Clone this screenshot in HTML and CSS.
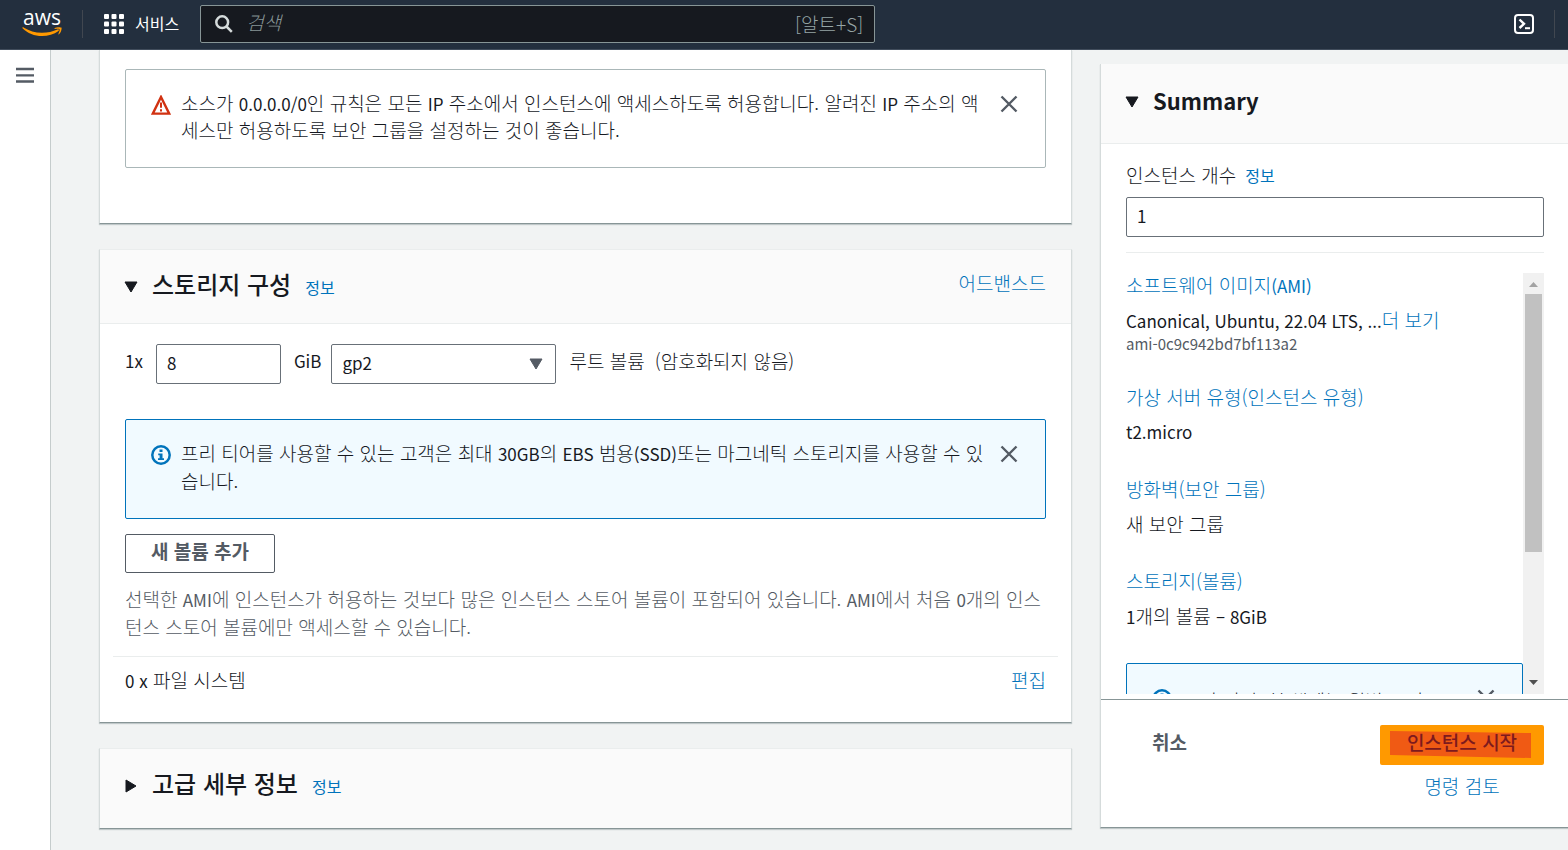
FILE: index.html
```html
<!DOCTYPE html>
<html lang="ko">
<head>
<meta charset="utf-8">
<title>인스턴스 시작 | EC2</title>
<link rel="stylesheet" href="styles.css">
</head>
<body>
<header class="topbar">
  <a class="logo" href="#" aria-label="aws">
    <span class="logo-word">aws</span>
    <svg class="logo-smile" width="40" height="10" viewBox="0 0 40 10"><path d="M0.500 1.200C0 0.500 1 0 2 0.700C7 3.800 13 5.800 20 5.800C25.500 5.800 31 4.500 35.500 2.500C36.700 2 37.500 3 36.500 3.900C32 7.300 26 9 20 9C12.500 9 5.500 6.200 0.500 1.200Z" fill="#ff9900"/><path d="M32.500 1.300C34.500 -0.200 38.800 0 39.400 0.600C40 1.400 39.200 5.500 37 7.300C36.600 7.600 36.200 7.400 36.400 6.900C37 5.500 38 3 37.500 2.200C36.900 1.500 34.300 1.700 33 1.900C32.500 1.900 32.300 1.500 32.500 1.300Z" fill="#ff9900"/></svg>
  </a>
  <button class="services" type="button">
    <svg width="20" height="20" viewBox="0 0 20 20" fill="#fff"><rect width="5" height="5" rx="1"/><rect x="7.500" width="5" height="5" rx="1"/><rect x="15" width="5" height="5" rx="1"/><rect y="7.500" width="5" height="5" rx="1"/><rect x="7.500" y="7.500" width="5" height="5" rx="1"/><rect x="15" y="7.500" width="5" height="5" rx="1"/><rect y="15" width="5" height="5" rx="1"/><rect x="7.500" y="15" width="5" height="5" rx="1"/><rect x="15" y="15" width="5" height="5" rx="1"/></svg>
    <span>서비스</span>
  </button>
  <label class="search">
    <svg width="18" height="18" viewBox="0 0 18 18" fill="none" stroke="#d5dbdb" stroke-width="2.500"><circle cx="7.200" cy="7.200" r="5.900"/><path d="M11.500 11.500L16.800 16.800"/></svg>
    <input type="search" placeholder="검색" aria-label="검색">
    <span class="shortcut">[알트+S]</span>
  </label>
  <button class="shell" type="button" aria-label="CloudShell">
    <svg width="20" height="20" viewBox="0 0 20 20" fill="none" stroke="#fff" stroke-width="2"><rect x="1" y="1" width="18" height="18" rx="3"/><path d="M5.500 5.500L10 9.800L5.500 14" stroke-width="2.400"/><path d="M11 14.200H16"/></svg>
  </button>
</header>

<div class="page">
  <nav class="rail">
    <button type="button" aria-label="메뉴"><svg width="18" height="16" viewBox="0 0 18 16" stroke="#545b64" stroke-width="2.300"><path d="M0 2H18M0 8.300H18M0 14.500H18"/></svg></button>
  </nav>
  <main class="content">
    <div class="column">
      <section class="card card-first">
        <div class="alert alert-plain">
          <svg class="alert-icon" width="20" height="20" viewBox="0 0 20 20" fill="none" stroke="#d13212" stroke-width="2.400"><path d="M10 2L18.200 18.600H1.800Z"/><path d="M10 7.500V12.800M10 14.300V16.500" stroke-width="2"/></svg>
          <p>소스가 <span class="lat">0.0.0.0/0</span>인 규칙은 모든 <span class="lat">IP</span> 주소에서 인스턴스에 액세스하도록 허용합니다. 알려진 <span class="lat">IP</span> 주소의 액세스만 허용하도록 보안 그룹을 설정하는 것이 좋습니다.</p>
          <button class="close" type="button" aria-label="닫기"><svg width="18" height="18" viewBox="0 0 18 18" stroke="#545b64" stroke-width="2.400"><path d="M1.500 1.500L16.500 16.500M16.500 1.500L1.500 16.500"/></svg></button>
        </div>
      </section>

      <section class="card">
        <div class="card-head">
          <svg class="caret" width="14" height="12" viewBox="0 0 14 12"><path d="M1 1H13L7 11Z" fill="#16191f" stroke="#16191f" stroke-linejoin="round"/></svg>
          <h2>스토리지 구성</h2>
          <a class="info" href="#">정보</a>
          <a class="head-action" href="#">어드밴스드</a>
        </div>
        <div class="card-body">
          <div class="volume">
            <label class="lat" for="size">1x</label>
            <input class="field size" id="size" type="text" value="8">
            <label class="lat" for="type">GiB</label>
            <span class="select-wrap">
              <select class="field" id="type"><option>gp2</option></select>
              <svg class="select-caret" width="14" height="12" viewBox="0 0 14 12"><path d="M1 1H13L7 11Z" fill="#545b64" stroke="#545b64" stroke-linejoin="round"/></svg>
            </span>
            <span class="volume-name">루트 볼륨</span>
            <span class="volume-state">(암호화되지 않음)</span>
          </div>
          <div class="alert alert-info">
            <svg class="alert-icon" width="20" height="20" viewBox="0 0 20 20"><circle cx="10" cy="10" r="8.700" fill="none" stroke="#0073bb" stroke-width="2.500"/><path d="M8.500 4.500H11.500V7H8.500ZM7.200 8.500H11.500V13.200H13V15H7V13.200H8.600V10.300H7.200Z" fill="#0073bb"/></svg>
            <p>프리 티어를 사용할 수 있는 고객은 최대 <span class="lat">30GB</span>의 <span class="lat">EBS</span> 범용<span class="lat">(SSD)</span>또는 마그네틱 스토리지를 사용할 수 있습니다.</p>
            <button class="close" type="button" aria-label="닫기"><svg width="18" height="18" viewBox="0 0 18 18" stroke="#545b64" stroke-width="2.400"><path d="M1.500 1.500L16.500 16.500M16.500 1.500L1.500 16.500"/></svg></button>
          </div>
          <button class="add" type="button">새 볼륨 추가</button>
          <p class="note">선택한 <span class="lat">AMI</span>에 인스턴스가 허용하는 것보다 많은 인스턴스 스토어 볼륨이 포함되어 있습니다. <span class="lat">AMI</span>에서 처음 <span class="lat">0</span>개의 인스턴스 스토어 볼륨에만 액세스할 수 있습니다.</p>
          <div class="files"><span><span class="lat">0 x</span> 파일 시스템</span><a href="#">편집</a></div>
        </div>
      </section>

      <section class="card card-closed">
        <div class="card-head">
          <svg class="caret" width="14" height="14" viewBox="0 0 14 14"><path d="M2 1L12 7L2 13Z" fill="#16191f" stroke="#16191f" stroke-linejoin="round"/></svg>
          <h2>고급 세부 정보</h2>
          <a class="info" href="#">정보</a>
        </div>
      </section>
    </div>

    <aside class="summary">
      <div class="card-head">
        <svg class="caret" width="14" height="12" viewBox="0 0 14 12"><path d="M1 1H13L7 11Z" fill="#16191f" stroke="#16191f" stroke-linejoin="round"/></svg>
        <h2 class="title-latin">Summary</h2>
      </div>
      <div class="count">
        <div class="count-label"><label for="count">인스턴스 개수</label><a class="info" href="#">정보</a></div>
        <input class="field" id="count" type="text" value="1">
      </div>
      <div class="scroller">
        <div class="details">
          <section><a href="#">소프트웨어 이미지<span class="lat">(AMI)</span></a><p><span class="lat">Canonical, Ubuntu, 22.04 LTS, ...</span><a href="#">더 보기</a></p><small>ami-0c9c942bd7bf113a2</small></section>
          <section><a href="#">가상 서버 유형(인스턴스 유형)</a><p class="lat">t2.micro</p></section>
          <section><a href="#">방화벽(보안 그룹)</a><p>새 보안 그룹</p></section>
          <section><a href="#">스토리지(볼륨)</a><p><span class="lat">1</span>개의 볼륨 <span class="lat">– 8GiB</span></p></section>
          <div class="alert alert-info">
            <svg class="alert-icon" width="20" height="20" viewBox="0 0 20 20"><circle cx="10" cy="10" r="8.700" fill="none" stroke="#0073bb" stroke-width="2.500"/><path d="M8.500 4.500H11.500V7H8.500ZM7.200 8.500H11.500V13.200H13V15H7V13.200H8.600V10.300H7.200Z" fill="#0073bb"/></svg>
            <p>프리 티어: 첫 해에는 월별 프리</p>
            <button class="close" type="button" aria-label="닫기"><svg width="18" height="18" viewBox="0 0 18 18" stroke="#545b64" stroke-width="2.400"><path d="M1.500 1.500L16.500 16.500M16.500 1.500L1.500 16.500"/></svg></button>
          </div>
        </div>
        <div class="track" aria-hidden="true">
          <svg width="9" height="5" viewBox="0 0 9 5"><path d="M0 5L4.500 0L9 5Z" fill="#a3a3a3"/></svg>
          <div class="thumb"></div>
          <svg width="9" height="5" viewBox="0 0 9 5"><path d="M0 0L4.500 5L9 0Z" fill="#505050"/></svg>
        </div>
      </div>
      <footer class="actions">
        <button class="cancel" type="button">취소</button>
        <div class="action-stack">
          <button class="launch" type="button">
            <svg class="mark" viewBox="0 0 164 40" preserveAspectRatio="none"><path d="M10 6L151 8V33L10 30Z" fill="#f05a14"/></svg>
            <span>인스턴스 시작</span>
          </button>
          <a href="#">명령 검토</a>
        </div>
      </footer>
    </aside>
  </main>
</div>
</body>
</html>
```
FILE: styles.css
```css
* { box-sizing: border-box; }

body {
  margin: 0;
  height: 100vh;
  display: flex;
  flex-direction: column;
  overflow: hidden;
  background: #f1f3f3;
  color: #16191f;
  font: 300 19px/28px "Noto Sans CJK KR", "Noto Sans", sans-serif;
}

p, h2 { margin: 0; }
a { color: #0073bb; text-decoration: none; }
svg { display: block; flex: none; }
button { font: inherit; color: inherit; border: 0; padding: 0; background: none; }
.lat { font-size: 17px; font-weight: 400; }
span.lat { line-height: 20px; }

.topbar {
  display: flex;
  align-items: center;
  flex: none;
  height: 50px;
  padding: 0 13px 2px 22px;
  background: #232f3e;
  border-bottom: 1px solid #414d5c;
  color: #fff;
}
.logo { display: flex; flex-direction: column; align-items: center; width: 40px; padding-bottom: 2px; color: #fff; }
.logo-word { font: 500 21px/19px "Open Sans", sans-serif; }
.services {
  display: flex;
  align-items: center;
  gap: 11px;
  height: 28px;
  margin-left: 20px;
  padding-left: 21px;
  border-left: 1px solid #414750;
  font-size: 16px;
  font-weight: 400;
}
.services span { padding-bottom: 2px; }
.search {
  display: flex;
  align-items: center;
  gap: 13px;
  width: 675px;
  height: 38px;
  margin-left: 21px;
  padding: 0 11px 0 14px;
  border: 1px solid #879596;
  border-radius: 2px;
  background: #16191f;
}
.search input { flex: 1; min-width: 0; border: 0; padding: 0 0 4px; outline: 0; background: none; color: #fff; font: inherit; }
.search input::placeholder { color: #879596; font-style: italic; opacity: 1; }
.shortcut { color: #95a5a6; }
.shell { display: flex; align-items: center; height: 28px; margin-left: auto; padding-right: 20px; border-right: 1px solid #414750; }

.page { display: flex; flex: 1; min-height: 0; }
.rail { flex: none; width: 51px; padding: 17px 16px; background: #fff; border-right: 1px solid #c5cccc; }
.rail button { display: block; }
.content {
  flex: 1;
  min-width: 0;
  display: grid;
  grid-template-columns: minmax(0, 1fr) 468px;
  gap: 28px;
  padding-left: 48px;
}
.column { display: flex; flex-direction: column; gap: 25px; }
.card, .summary {
  background: #fff;
  border: 1px solid #d5dbdb;
  border-top-color: #eaeded;
  border-bottom-color: #879596;
  box-shadow: 0 1px 1px rgba(0, 28, 36, 0.2);
}
.card-first { border-top: 0; padding: 19px 25px 55px; }
.card-head {
  display: flex;
  align-items: center;
  height: 74px;
  padding: 0 25px 0 24px;
  background: #fafafa;
  border-bottom: 1px solid #eaeded;
}
.caret { margin-right: 14px; }
h2 { padding-bottom: 6px; font-size: 24px; font-weight: 500; line-height: 32px; }
h2.title-latin { padding-bottom: 4px; font-size: 22px; font-weight: 700; }
.info { margin-left: 14px; font-size: 16px; font-weight: 400; }
.head-action { margin-left: auto; padding-bottom: 8px; }
.card-closed .card-head { height: 79px; padding-bottom: 6px; border: 0; }

.alert {
  display: flex;
  align-items: flex-start;
  gap: 10px;
  padding: 19px 27px 23px 25px;
  border: 1px solid #aab7b8;
  border-radius: 2px;
}
.alert p { flex: 1; word-break: break-all; }
.alert-plain { padding-bottom: 24px; }
.alert-plain p { line-height: 27px; }
.alert-icon { margin-top: 6px; }
.close { margin: 6px 0 0 2px; }
.alert-info { border-color: #0073bb; background: #f1faff; }

.field {
  width: 100%;
  height: 40px;
  padding: 0 10px 3px;
  border: 1px solid #687078;
  border-radius: 2px;
  background: #fff;
  color: #16191f;
  font: inherit;
  font-size: 17px;
  font-weight: 400;
}
.card-body { padding: 20px 25px 27px; }
.volume { display: flex; align-items: center; gap: 10px; margin-bottom: 35px; }
.volume label, .volume-name, .volume-state { padding-bottom: 6px; }
.volume .size { width: 125px; margin: 0 3px; }
.select-wrap { display: grid; align-items: center; width: 225px; }
.select-wrap > * { grid-area: 1 / 1; }
.select-wrap select { appearance: none; }
.select-caret { justify-self: end; margin-right: 13px; pointer-events: none; }
.volume-name { margin-left: 3px; }
.add {
  height: 39px;
  margin: 15px 0 12px;
  padding: 0 25px 5px;
  border: 1px solid #545b64;
  border-radius: 2px;
  color: #545b64;
  font-weight: 700;
}
.note { color: #545b64; word-break: break-all; }
.files {
  display: flex;
  justify-content: space-between;
  margin: 15px -12px 0;
  padding: 9px 12px 1px;
  border-top: 1px solid #eaeded;
}

.summary {
  display: flex;
  flex-direction: column;
  align-self: start;
  height: calc(100vh - 86px);
  margin-top: 14px;
  border-top: 0;
  border-right: 0;
}
.summary .card-head { flex: none; height: 80px; padding-bottom: 4px; }
.count { flex: none; margin: 0 24px 0 25px; padding: 17px 0 15px; border-bottom: 1px solid #eaeded; }
.count-label { display: flex; align-items: center; margin-bottom: 8px; }
.count-label .info { margin-left: 9px; }
.scroller { flex: 1; min-height: 0; display: flex; margin: 20px 24px 5px 25px; }
.details { flex: 1; min-width: 0; overflow: hidden; }
.details section { margin-bottom: 31px; }
.details section > a { display: block; line-height: 24px; }
.details p { line-height: 28px; }
.details section > p { margin-top: 9px; }
.details small { display: block; color: #545b64; font-size: 15px; font-weight: 400; line-height: 20px; }
.details .alert { margin-top: 33px; }
.details .alert p { padding-top: 4px; white-space: nowrap; }
.track { display: flex; flex-direction: column; align-items: center; width: 21px; padding: 9px 0; background: #f1f1f1; }
.thumb { width: 17px; height: 64%; margin: 7px 0 auto; background: #c1c1c1; }
.actions {
  display: flex;
  justify-content: space-between;
  align-items: flex-start;
  flex: none;
  height: 128px;
  padding: 25px 24px 0 51px;
  border-top: 1px solid #879596;
}
.cancel { margin-top: 3px; color: #545b64; font-weight: 700; }
.action-stack { display: flex; flex-direction: column; align-items: center; gap: 7px; }
.launch {
  display: grid;
  align-items: center;
  justify-items: center;
  width: 164px;
  height: 40px;
  border-radius: 2px;
  background: #ff9900;
  color: #7d1a1e;
  font-weight: 500;
}
.launch > * { grid-area: 1 / 1; }
.launch span { padding-bottom: 6px; }
.mark { width: 100%; height: 100%; }
```
